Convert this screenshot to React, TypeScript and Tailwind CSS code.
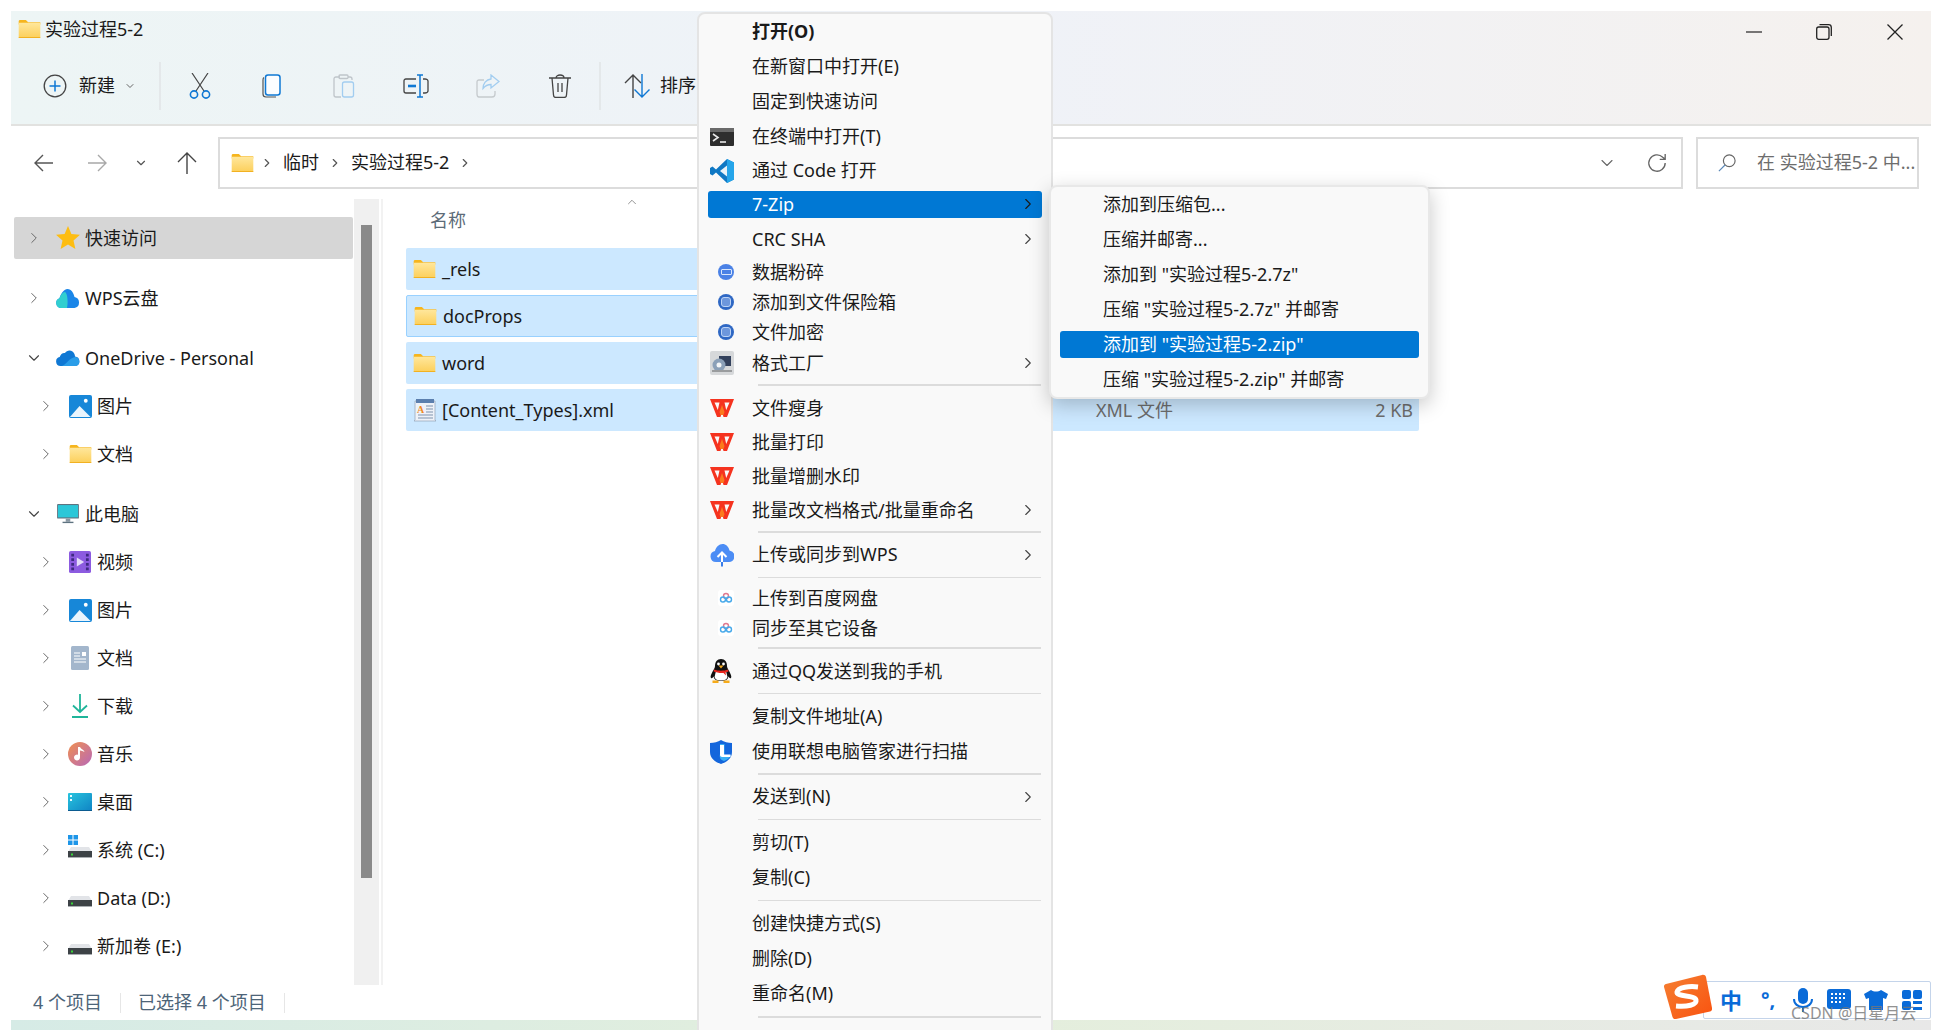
import { ChevronDown, ChevronRight, ChevronUp } from "lucide-react";

function FolderIcon({ className = "h-[18px] w-[23px]" }: { className?: string }) {
  return (
    <svg viewBox="0 0 24 20" className={className}>
      <defs>
        <linearGradient id="fold" x1="0" y1="0" x2="0" y2="1">
          <stop offset="0" stopColor="#ffe79c" />
          <stop offset="1" stopColor="#fccf5a" />
        </linearGradient>
      </defs>
      <path d="M0 1.5C0 .7.7 0 1.5 0H8l2.5 2.5H24V5H0z" fill="#f6b51e" />
      <rect x="0" y="3" width="24" height="17" rx="0.8" fill="url(#fold)" />
      <rect x="0" y="19" width="24" height="1" fill="#f1ae1b" />
    </svg>
  );
}

function XmlIcon() {
  return (
    <svg viewBox="0 0 24 24" className="h-[24px] w-[24px]">
      <path d="M2 3h20v19l1 1H1l1-1z" fill="#eef2f8" stroke="#9aa9bd" strokeWidth="0.8" />
      <rect x="3" y="1" width="18" height="4" fill="#5b7fae" />
      <text x="4" y="15" fontSize="10" fontWeight="700" fill="#f08a24" fontFamily="Liberation Serif">A</text>
      <path d="M13 8h7M13 11h7M13 14h7M5 17h15M5 20h15" stroke="#7f93ad" strokeWidth="1" />
    </svg>
  );
}

function PictureIcon() {
  return (
    <svg viewBox="0 0 24 24" className="h-[23px] w-[23px]">
      <rect x="0" y="0" width="24" height="24" rx="2" fill="#1787d8" />
      <circle cx="17.5" cy="6" r="2" fill="#fff" />
      <path d="M1 23 11 11.5 22.5 23z" fill="#eaf5fd" />
    </svg>
  );
}

function TreeIcon({ kind }: { kind: string }) {
  if (kind === "star")
    return (
      <svg viewBox="0 0 24 24" className="h-[24px] w-[24px]">
        <path d="m12 0 3.4 8 8.6.8-6.5 5.7L19.4 23 12 18.5 4.6 23l1.9-8.5L0 8.8 8.6 8z" fill="#fdbd12" />
      </svg>
    );
  if (kind === "wps")
    return (
      <svg viewBox="0 0 24 24" className="h-[24px] w-[24px]">
        <path d="M5 22a5 5 0 0 1-1.5-9.7C4.5 8.5 7.5 3 11.5 3s6 4 7 8a5.6 5.6 0 0 1 0 11z" fill="#1a86e8" />
        <path d="M5 22a5 5 0 0 1-1.5-9.7C4.5 9 7 6 9 6c3 2 3 11 2 16z" fill="#31cfd0" />
      </svg>
    );
  if (kind === "onedrive")
    return (
      <svg viewBox="0 0 24 18" className="h-[18px] w-[24px]">
        <path d="M4.5 17a4.5 4.5 0 0 1-.8-8.9C4.500 5 7 3.500 9 4 10.500 1.500 14 .500 16.500 2.500 18 3.500 19 5.500 19 7.500a4.800 4.800 0 0 1 .5 9.500z" fill="#0f78d4" />
        <path d="M19 8a4.600 4.600 0 0 1 1 9H6c4-1 7-8 13-9z" fill="#2a9de8" />
      </svg>
    );
  if (kind === "picture") return <PictureIcon />;
  if (kind === "folder") return <FolderIcon className="h-[18px] w-[23px]" />;
  if (kind === "pc")
    return (
      <svg viewBox="0 0 24 22" className="h-[20px] w-[24px]">
        <rect x="0" y="0" width="24" height="16" rx="1" fill="#5e7380" />
        <rect x="1" y="1.200" width="22" height="13.500" fill="#2bc7d8" />
        <rect x="9.500" y="16" width="5" height="3.500" fill="#8a98a3" />
        <rect x="6" y="19.500" width="12" height="1.500" fill="#5e7380" />
      </svg>
    );
  if (kind === "video")
    return (
      <svg viewBox="0 0 24 24" className="h-[24px] w-[22px]">
        <rect x="0" y="0" width="24" height="24" rx="2" fill="#8c5be0" />
        <path d="M2.500 3h3v3h-3zM2.500 8h3v3h-3zM2.500 13h3v3h-3zM2.500 18h3v3h-3zM18.500 3h3v3h-3zM18.500 8h3v3h-3zM18.500 13h3v3h-3zM18.500 18h3v3h-3z" fill="#3f2a82" />
        <path d="M8.500 7v10l8-5z" fill="#e4dcfa" />
      </svg>
    );
  if (kind === "doc")
    return (
      <svg viewBox="0 0 18 24" className="h-[24px] w-[18px]">
        <rect x="0" y="0" width="18" height="24" rx="1.500" fill="#a3b6cc" />
        <path d="M3 7h6M3 10h6M3 13h12M3 16h12" stroke="#fff" strokeWidth="1.100" />
        <rect x="11" y="6" width="4" height="4" fill="#fff" />
      </svg>
    );
  if (kind === "download")
    return (
      <svg viewBox="0 0 18 24" className="h-[24px] w-[18px]" fill="none" stroke="#1fb59a" strokeWidth="1.800">
        <path d="M9 0v18M2 11.500 9 18l7-6.500M1 23h16" />
      </svg>
    );
  if (kind === "music")
    return (
      <svg viewBox="0 0 24 24" className="h-[24px] w-[24px]">
        <defs>
          <linearGradient id="mus" x1="0" y1="0" x2="1" y2="1">
            <stop offset="0" stopColor="#f09050" />
            <stop offset="1" stopColor="#b868b8" />
          </linearGradient>
        </defs>
        <circle cx="12" cy="12" r="12" fill="url(#mus)" />
        <path d="M12 5v10.500a3 3 0 1 1-2-2.800V5zM12 5c1 2.500 4 2.500 4.500 5-1.500-1-3-1.500-4.500-1.500z" fill="#fff" />
      </svg>
    );
  if (kind === "desktop")
    return (
      <svg viewBox="0 0 24 18" className="h-[18px] w-[24px]">
        <defs>
          <linearGradient id="desk" x1="0" y1="0" x2="1" y2="1">
            <stop offset="0" stopColor="#28c4de" />
            <stop offset="1" stopColor="#0f83c4" />
          </linearGradient>
        </defs>
        <rect x="0" y="0" width="24" height="18" rx="1" fill="url(#desk)" />
        <rect x="2" y="2" width="2" height="2" fill="#e8fbff" />
        <rect x="2" y="6" width="2" height="2" fill="#e8fbff" />
        <rect x="0" y="17" width="24" height="1" fill="#0b5b90" />
      </svg>
    );
  const drive = (
    <>
      <path d="M3 8h18l3 5v0H0z" fill="#e2e4e8" />
      <rect x="0" y="12" width="24" height="7" fill="#3d4246" />
      <rect x="0" y="18" width="24" height="1" fill="#a9adb1" />
      <rect x="3" y="14.500" width="2" height="2" fill="#37d437" />
    </>
  );
  return (
    <svg viewBox="0 0 24 19" className={kind === "sys" ? "mb-[4px] h-[19px] w-[24px] overflow-visible" : "mb-[2px] h-[19px] w-[24px]"}>
      {kind === "sys" && <path d="M0-4h4.500V.500H0zM5.500-4H10V.500H5.500zM0 1.500h4.500V6H0zM5.500 1.500H10V6H5.500z" fill="#1d95e8" />}
      {drive}
    </svg>
  );
}

function Sep() {
  return <div className="h-[48px] w-[2px] bg-[#e4e8ea]" />;
}

function Toolbar() {
  return (
    <div className="flex h-[77px] items-center pl-[32px] text-[18px] text-[#1a1a1a]">
      <svg viewBox="0 0 24 24" className="h-[24px] w-[24px]" fill="none">
        <circle cx="12" cy="12" r="10.800" stroke="#444" strokeWidth="1.300" />
        <path d="M12 6.500v11M6.500 12h11" stroke="#0f78d4" strokeWidth="1.500" />
      </svg>
      <span className="ml-[12px] w-[36px]">新建</span>
      <ChevronDown className="ml-[9px] h-[12px] w-[12px] text-[#666]" />
      <div className="ml-[23px]"><Sep /></div>
      <div className="ml-[26px] flex w-[26px] justify-center">
        <svg viewBox="0 0 22 26" className="h-[26px] w-[22px]" fill="none">
          <path d="M3 0 15 18M19 0 7 18" stroke="#444" strokeWidth="1.200" />
          <circle cx="5" cy="21.500" r="3.600" stroke="#0f78d4" strokeWidth="1.600" />
          <circle cx="17" cy="21.500" r="3.600" stroke="#0f78d4" strokeWidth="1.600" />
        </svg>
      </div>
      <div className="ml-[46px] flex w-[26px] justify-center">
        <svg viewBox="0 0 20 24" className="h-[24px] w-[20px]" fill="none">
          <path d="M2 3.500C1 4 1 5 1 6v14c0 2 1 3 3 3h10" stroke="#555" strokeWidth="1.200" />
          <rect x="3.500" y="1" width="14.500" height="20" rx="2.500" fill="#fbfdff" stroke="#0f78d4" strokeWidth="1.500" />
        </svg>
      </div>
      <div className="ml-[46px] flex w-[26px] justify-center">
        <svg viewBox="0 0 22 24" className="h-[24px] w-[22px]" fill="none">
          <path d="M7 3H3C1.500 3 1 4 1 5v16c0 1 .5 2 2 2h5M15 3h2c1 0 2 .5 2 2v1" stroke="#bfc5ca" strokeWidth="1.300" />
          <rect x="6" y="1" width="9" height="3.500" rx="1" stroke="#bfc5ca" strokeWidth="1.300" />
          <rect x="9.500" y="8" width="11" height="15" rx="2" stroke="#a2cdf0" strokeWidth="1.300" />
        </svg>
      </div>
      <div className="ml-[46px] flex w-[26px] justify-center">
        <svg viewBox="0 0 26 24" className="h-[24px] w-[26px]" fill="none">
          <path d="M13 5H3C1.500 5 1 6 1 7v10c0 1 .5 2 2 2h10M20 5h2c1.500 0 3 1 3 2v10c0 1-1.500 2-3 2h-2" stroke="#444" strokeWidth="1.300" />
          <path d="M5 12h8" stroke="#0f78d4" strokeWidth="2.600" />
          <path d="M14 1h6M14 23h6M17 1v22" stroke="#0f78d4" strokeWidth="1.500" />
        </svg>
      </div>
      <div className="ml-[46px] flex w-[26px] justify-center">
        <svg viewBox="0 0 24 24" className="h-[24px] w-[24px]" fill="none">
          <path d="M8 6H3C1.500 6 1 7 1 8v12c0 2 1 3 2 3h13c2 0 3-1 3-3v-3" stroke="#c5cacd" strokeWidth="1.300" />
          <path d="M15 1l8 6.500-8 6.500v-3.500c-4 0-6 1.500-8 4 0-5 3-9 8-9.500z" stroke="#a2cdf0" strokeWidth="1.300" />
        </svg>
      </div>
      <div className="ml-[46px] flex w-[26px] justify-center">
        <svg viewBox="0 0 22 24" className="h-[24px] w-[22px]" fill="none" stroke="#444" strokeWidth="1.300">
          <path d="M0 4h22M7 4c0-4 8-4 8 0M3 4l1.500 17c0 1.500 1 2.500 2.500 2.500h8c1.500 0 2.500-1 2.500-2.500L19 4M9 9v9M13 9v9" />
        </svg>
      </div>
      <div className="ml-[26px]"><Sep /></div>
      <div className="ml-[23px] flex h-[24px] w-[26px] justify-center">
        <svg viewBox="0 0 26 24" className="h-[24px] w-[26px]" fill="none" strokeWidth="1.400">
          <path d="M9 24V1M1 9l8-8 8 8" stroke="#444" />
          <path d="M18 0v23M10.500 15.500 18 23l7.500-7.500" stroke="#0f78d4" />
        </svg>
      </div>
      <span className="ml-[10px]">排序</span>
    </div>
  );
}

function Header() {
  return (
    <header className="h-[115px] shrink-0 border-b-2 border-[#e2e2e0] bg-gradient-to-r from-[#edf5f5] via-[#eff2f8] to-[#f5f1ee]">
      <div className="flex h-[36px] items-center pl-[7px]">
        <FolderIcon />
        <span className="ml-[4px] text-[18px] text-[#1a1a1a]">实验过程5-2</span>
        <div className="ml-auto mt-[6px] flex items-center">
          <svg viewBox="0 0 16 16" className="h-[16px] w-[16px]"><path d="M0 8h16" stroke="#222" strokeWidth="1.200" /></svg>
          <svg viewBox="0 0 16 16" className="ml-[54px] h-[16px] w-[16px]" fill="none" stroke="#222" strokeWidth="1.300">
            <rect x="0.700" y="3" width="12.300" height="12.300" rx="2" />
            <path d="M3.500 .7h9c1.500 0 2.800 1.300 2.800 2.800v8.500" />
          </svg>
          <svg viewBox="0 0 16 16" className="ml-[55px] mr-[28px] h-[16px] w-[16px]"><path d="M.5.5l15 15M15.500.5l-15 15" stroke="#222" strokeWidth="1.300" /></svg>
        </div>
      </div>
      <Toolbar />
    </header>
  );
}

function NavBar() {
  return (
    <div className="flex h-[73px] shrink-0 items-center text-[18px] text-[#1a1a1a]">
      <svg viewBox="0 0 20 18" className="ml-[23px] h-[18px] w-[20px]" fill="none" stroke="#555" strokeWidth="1.400"><path d="M19 9H1M9 1 1 9l8 8" /></svg>
      <svg viewBox="0 0 20 18" className="ml-[33px] h-[18px] w-[20px]" fill="none" stroke="#a8a8a8" strokeWidth="1.400"><path d="M1 9h18M11 1l8 8-8 8" /></svg>
      <ChevronDown className="ml-[27px] h-[14px] w-[14px] text-[#555]" />
      <svg viewBox="0 0 20 22" className="ml-[29px] h-[22px] w-[20px]" fill="none" stroke="#444" strokeWidth="1.400"><path d="M10 22V1M1 10l9-9 9 9" /></svg>
      <div className="ml-[21px] flex h-[52px] w-[1465px] items-center border-2 border-[#dcdcdc] bg-white pl-[11px]">
        <FolderIcon />
        <ChevronRight className="ml-[6px] h-[14px] w-[14px] text-[#555]" />
        <span className="ml-[9px]">临时</span>
        <ChevronRight className="ml-[9px] h-[14px] w-[14px] text-[#555]" />
        <span className="ml-[9px]">实验过程5-2</span>
        <ChevronRight className="ml-[9px] h-[14px] w-[14px] text-[#555]" />
        <ChevronDown className="ml-auto h-[20px] w-[20px] stroke-[1.300] text-[#666]" />
        <svg viewBox="0 0 22 22" className="ml-[30px] mr-[14px] h-[20px] w-[20px]" fill="none" stroke="#666" strokeWidth="1.500">
          <path d="M20 11a9 9 0 1 1-2.700-6.400L20 7M20 1v6h-6" />
        </svg>
      </div>
      <div className="ml-[13px] flex h-[52px] w-[223px] items-center overflow-hidden whitespace-nowrap border-2 border-[#dcdcdc] bg-white pl-[20px] text-[#6d6d6d]">
        <svg viewBox="0 0 20 20" className="h-[18px] w-[18px]" fill="none" strokeWidth="1.300">
          <circle cx="12.500" cy="7.500" r="6.500" stroke="#666" />
          <path d="M7.800 12.200 1 19" stroke="#5b88b8" />
        </svg>
        <span className="ml-[21px]">在 实验过程5-2 中...</span>
      </div>
    </div>
  );
}

const tree = [
  { label: "快速访问", icon: "star", top: true, chevron: "right", hover: true },
  { label: "WPS云盘", icon: "wps", top: true, chevron: "right", group: "mt-[12px]" },
  { label: "OneDrive - Personal", icon: "onedrive", top: true, chevron: "down", group: "mt-[12px]" },
  { label: "图片", icon: "picture" },
  { label: "文档", icon: "folder" },
  { label: "此电脑", icon: "pc", top: true, chevron: "down", group: "mt-[12px]" },
  { label: "视频", icon: "video" },
  { label: "图片", icon: "picture" },
  { label: "文档", icon: "doc" },
  { label: "下载", icon: "download" },
  { label: "音乐", icon: "music" },
  { label: "桌面", icon: "desktop" },
  { label: "系统 (C:)", icon: "sys" },
  { label: "Data (D:)", icon: "drive" },
  { label: "新加卷 (E:)", icon: "drive" },
];

function Sidebar() {
  return (
    <aside className="w-[343px] shrink-0 pt-[15px] text-[18px] text-[#1a1a1a]">
      {tree.map((item, i) => (
        <div key={i} className={`flex h-[48px] items-center ${item.group ?? ""}`}>
          <div className={`ml-[3px] flex h-[42px] w-[339px] items-center rounded-[2px] ${item.hover ? "bg-[#d6d6d6]" : ""} ${item.top ? "pl-[11px]" : "pl-[23px]"}`}>
            {item.chevron === "down" ? (
              <ChevronDown className="h-[18px] w-[18px] stroke-[1.500] text-[#444]" />
            ) : (
              <ChevronRight className="h-[18px] w-[18px] stroke-[1.300] text-[#666]" />
            )}
            <div className="ml-[13px] flex w-[24px] justify-center"><TreeIcon kind={item.icon} /></div>
            <span className="ml-[5px]">{item.label}</span>
          </div>
        </div>
      ))}
    </aside>
  );
}

const files = [
  { name: "_rels", border: false },
  { name: "docProps", border: true },
  { name: "word", border: false },
];

function FileList() {
  return (
    <section className="ml-[23px] flex-1 text-[18px] text-[#1a1a1a]">
      <div className="relative h-[49px]">
        <span className="absolute left-[24px] top-[8px] text-[#5c6b78]">名称</span>
        <ChevronUp className="absolute left-[218px] top-[-4px] h-[14px] w-[16px] stroke-[1.200] text-[#666]" />
      </div>
      <div className="flex w-[1013px] flex-col gap-[5px]">
        {files.map((f) => (
          <div key={f.name} className={`flex h-[42px] items-center rounded-[2px] bg-[#cce8ff] pl-[7px] ${f.border ? "border border-[#99d1ff] pl-[6px]" : ""}`}>
            <FolderIcon />
            <span className="ml-[6px]">{f.name}</span>
          </div>
        ))}
        <div className="flex h-[42px] items-center rounded-[2px] bg-[#cce8ff] pl-[7px]">
          <XmlIcon />
          <span className="ml-[5px]">[Content_Types].xml</span>
          <span className="ml-[482px] text-[#6d6d6d]">XML 文件</span>
          <span className="ml-auto pr-[6px] text-[#6d6d6d]">2 KB</span>
        </div>
      </div>
    </section>
  );
}

function MenuIcon({ kind }: { kind?: string }) {
  if (!kind) return null;
  if (kind === "terminal")
    return (
      <svg viewBox="0 0 24 18" className="h-[18px] w-[24px]">
        <rect width="24" height="18" rx="1" fill="#2e2e2e" />
        <rect width="24" height="4" y="0" fill="#6a6a6a" />
        <path d="m3 6 5 3.500L3 13" fill="none" stroke="#e8e8e8" strokeWidth="1.600" />
        <path d="M10 14h6" stroke="#e8e8e8" strokeWidth="1.600" />
      </svg>
    );
  if (kind === "code")
    return (
      <svg viewBox="0 0 24 24" className="h-[24px] w-[24px]">
        <path d="M17 0 24 3.500v17L17 24 6 13.500 2.500 16.500 0 15v-6l2.500-1.500L6 10.500z" fill="#0f78c4" />
        <path d="M17 0 24 3.500v17L17 24z" fill="#25a5ea" />
        <path d="M17 6.500 10 12l7 5.500z" fill="#fff" fillOpacity="0.900" />
      </svg>
    );
  if (kind === "shred")
    return (
      <div className="ml-[8px] flex h-[16px] w-[16px] items-center justify-center rounded-full bg-[#4b82e6]">
        <div className="h-[6px] w-[11px] rounded-[1px] border border-[#d9e6fb]" />
      </div>
    );
  if (kind === "vault")
    return (
      <div className="ml-[8px] flex h-[16px] w-[16px] items-center justify-center rounded-full bg-[#2f68c4]">
        <div className="h-[10px] w-[10px] rounded-[3px] border border-[#bcd3f5] bg-[#6d97dc]" />
      </div>
    );
  if (kind === "factory")
    return (
      <svg viewBox="0 0 24 24" className="h-[24px] w-[24px]">
        <rect width="24" height="24" rx="2" fill="#d6d8da" />
        <rect x="9" y="5" width="12" height="10" fill="#33415c" />
        <circle cx="9" cy="14" r="6.500" fill="#8ba0b8" />
        <circle cx="9" cy="14" r="2.500" fill="#f3f5f7" />
        <path d="M2 20h20" stroke="#9a9c9e" strokeWidth="2" />
      </svg>
    );
  if (kind === "wps")
    return (
      <svg viewBox="0 0 24 20" className="h-[20px] w-[24px]">
        <path d="M0 1h24l-7 18h-3.500L12 14l-1.500 5H7z" fill="#f5331f" />
        <path d="M4.500 4.500h5L7.800 12zM14.500 4.500h5L16.200 12z" fill="#f9f9f9" />
        <path d="M9.500 14 12 7l2.500 7-1 3h-3z" fill="#fb7a1e" />
      </svg>
    );
  if (kind === "cloud")
    return (
      <svg viewBox="0 0 24 24" className="h-[24px] w-[24px]">
        <path d="M6 19a5.500 5.500 0 0 1-1-10.900C6 4 9 1 12.500 1c3.500 0 6 2.500 7 6.500a5.800 5.800 0 0 1-.5 11.500z" fill="#4c8df5" />
        <path d="M12 19V10M7.500 14 12 9.500l4.500 4.500" fill="none" stroke="#fff" strokeWidth="2" />
        <path d="M12 19v4.500" stroke="#3a7de8" strokeWidth="2" />
      </svg>
    );
  if (kind === "baidu")
    return (
      <svg viewBox="0 0 16 16" className="ml-[8px] h-[16px] w-[16px]" fill="none">
        <rect width="16" height="16" rx="3" fill="#fff" />
        <circle cx="8" cy="6" r="2.500" stroke="#e07a90" strokeWidth="1.400" />
        <circle cx="5" cy="9.500" r="2.500" stroke="#47a9ea" strokeWidth="1.400" />
        <circle cx="11" cy="9.500" r="2.500" stroke="#47a9ea" strokeWidth="1.400" />
      </svg>
    );
  if (kind === "qq")
    return (
      <svg viewBox="0 0 22 24" className="h-[24px] w-[22px]">
        <path d="M11 0c4 0 6 3 6 7 0 1 .5 2 1.500 4 2 3.500 3.500 6.500 2.500 8-.8.8-2-.5-2.500-1.500-.5 3-3 4.500-7.500 4.500S4 20.500 3.500 17.500C3 18.500 1.800 19.800 1 19c-1-1.500.5-4.500 2.500-8C4.500 9 5 8 5 7c0-4 2-7 6-7z" fill="#111" />
        <path d="M6 12c3 1 7 1 10 0l1.500 6c-.5 2.500-3 3.500-6.500 3.500S5 20.500 4.500 18z" fill="#fff" />
        <path d="M4 10.500c4 1.600 10 1.600 14 0l.5 2c-1 .5-2 .8-3 1l.5 3-2.500-2.600c-2 .2-4 .1-6-.4-1.500-.4-3-.7-3.800-1z" fill="#e8261e" />
        <path d="M8.500 6.500h5L11 9.500z" fill="#f6ab1a" />
        <circle cx="8.500" cy="5" r="1.400" fill="#fff" />
        <circle cx="13.500" cy="5" r="1.400" fill="#fff" />
        <path d="M2.500 21.500h6V24h-6zM13.500 21.500h6V24h-6z" fill="#f6ab1a" />
      </svg>
    );
  return (
    <svg viewBox="0 0 22 24" className="h-[24px] w-[22px]">
      <path d="M11 0c3 2 7 3 11 3v9c0 6-5 10-11 12C5 22 0 18 0 12V3c4 0 8-1 11-3z" fill="#1466dc" />
      <path d="M10 4h4.500v11H21c-1 3-4 5-7 6-3-1-5-3-4-7z" fill="#39b0f5" />
      <path d="M10 5h4v9.500h6.500V17H12c-1 0-2-1-2-2z" fill="#fff" />
    </svg>
  );
}

const menu = [
  { label: "打开(O)", h: "h-[35px]", bold: true },
  { label: "在新窗口中打开(E)", h: "h-[35px]" },
  { label: "固定到快速访问", h: "h-[35px]" },
  { label: "在终端中打开(T)", h: "h-[35px]", icon: "terminal" },
  { label: "通过 Code 打开", h: "h-[33px]", icon: "code" },
  { label: "7-Zip", h: "h-[34px]", more: true, active: true },
  { label: "CRC SHA", h: "h-[36px]", more: true },
  { label: "数据粉碎", h: "h-[30px]", icon: "shred" },
  { label: "添加到文件保险箱", h: "h-[30px]", icon: "vault" },
  { label: "文件加密", h: "h-[30px]", icon: "vault" },
  { label: "格式工厂", h: "h-[32px]", icon: "factory", more: true },
  { sep: "h-[12px]" },
  { label: "文件瘦身", h: "h-[34px]", icon: "wps" },
  { label: "批量打印", h: "h-[34px]", icon: "wps" },
  { label: "批量增删水印", h: "h-[34px]", icon: "wps" },
  { label: "批量改文档格式/批量重命名", h: "h-[34px]", icon: "wps", more: true },
  { sep: "h-[10px]" },
  { label: "上传或同步到WPS", h: "h-[35px]", icon: "cloud", more: true },
  { sep: "h-[11px]" },
  { label: "上传到百度网盘", h: "h-[30px]", icon: "baidu" },
  { label: "同步至其它设备", h: "h-[30px]", icon: "baidu" },
  { sep: "h-[10px]" },
  { label: "通过QQ发送到我的手机", h: "h-[36px]", icon: "qq" },
  { sep: "h-[9px]" },
  { label: "复制文件地址(A)", h: "h-[36px]" },
  { label: "使用联想电脑管家进行扫描", h: "h-[35px]", icon: "shield" },
  { sep: "h-[10px]" },
  { label: "发送到(N)", h: "h-[35px]", more: true },
  { sep: "h-[11px]" },
  { label: "剪切(T)", h: "h-[35px]" },
  { label: "复制(C)", h: "h-[35px]" },
  { sep: "h-[11px]" },
  { label: "创建快捷方式(S)", h: "h-[35px]" },
  { label: "删除(D)", h: "h-[35px]" },
  { label: "重命名(M)", h: "h-[35px]" },
  { sep: "h-[12px]" },
];

function ContextMenu() {
  return (
    <div className="absolute left-[697px] top-[12px] h-[1040px] w-[356px] rounded-[8px] border-2 border-[#e4e4e4] bg-[#f9f9f9] px-[9px] text-[18px] text-[#1a1a1a]">
      {menu.map((m, i) =>
        m.sep ? (
          <div key={i} className={`flex items-center pl-[50px] pr-[1px] ${m.sep}`}>
            <div className="h-[1.500px] w-full bg-[#dcdcdc]" />
          </div>
        ) : (
          <div key={i} className={`flex items-center ${m.h}`}>
            <div className={`flex h-[27px] w-full items-center rounded-[3px] ${m.active ? "bg-[#0078d4] text-white" : ""}`}>
              <div className="ml-[2px] flex w-[24px] justify-start">
                <MenuIcon kind={m.icon} />
              </div>
              <span className={`ml-[18px] ${m.bold ? "font-bold" : ""}`}>{m.label}</span>
              {m.more && <ChevronRight className={`ml-auto mr-[5px] h-[18px] w-[18px] stroke-[1.500] ${m.active ? "text-[#1a1a1a]" : "text-[#444]"}`} />}
            </div>
          </div>
        )
      )}
    </div>
  );
}

const subMenu = [
  "添加到压缩包...",
  "压缩并邮寄...",
  '添加到 "实验过程5-2.7z"',
  '压缩 "实验过程5-2.7z" 并邮寄',
  '添加到 "实验过程5-2.zip"',
  '压缩 "实验过程5-2.zip" 并邮寄',
];

function SubMenu() {
  return (
    <div className="absolute left-[1049px] top-[185px] h-[214px] w-[381px] rounded-[8px] border-2 border-[#e8e8e8] bg-[#f9f9f9] px-[9px] text-[18px] text-[#1a1a1a] shadow-[0_6px_20px_rgba(0,0,0,0.22)]">
      {subMenu.map((s, i) => (
        <div key={s} className="flex h-[35px] items-center">
          <div className={`flex h-[27px] w-full items-center rounded-[3px] pl-[43px] ${i === 4 ? "bg-[#0078d4] text-white" : ""}`}>{s}</div>
        </div>
      ))}
    </div>
  );
}

function ImeBar() {
  return (
    <>
      <div className="absolute left-[1703px] top-[981px] flex h-[38px] w-[228px] items-center rounded-[2px] border border-[#c4d4ea] bg-white pl-[16px] text-[#0a6bd8]">
        <span className="text-[22px] font-bold leading-none">中</span>
        <span className="ml-[19px] text-[20px] font-bold leading-none">°,</span>
        <svg viewBox="0 0 20 24" className="ml-[18px] h-[24px] w-[20px]" fill="none">
          <rect x="5" y="0" width="10" height="16" rx="5" fill="#0a6bd8" />
          <path d="M1 11c0 5 4 8 9 8s9-3 9-8M10 19v5" stroke="#0a6bd8" strokeWidth="2" />
        </svg>
        <svg viewBox="0 0 24 22" className="ml-[14px] h-[22px] w-[24px]">
          <rect width="24" height="20" rx="3" fill="#0a6bd8" />
          <path d="M4 5h16M4 9h16M4 13h11" stroke="#fff" strokeWidth="2" strokeDasharray="2 2" />
        </svg>
        <svg viewBox="0 0 24 20" className="ml-[13px] h-[20px] w-[24px]">
          <path d="M7 0c3 2 7 2 10 0l7 4-2 5-3-1v12H5V8L2 9 0 4z" fill="#0a6bd8" />
        </svg>
        <svg viewBox="0 0 20 20" className="ml-[14px] h-[20px] w-[20px]" fill="#0a6bd8">
          <rect width="9" height="9" rx="2" />
          <rect x="11" width="9" height="9" rx="2" />
          <rect y="11" width="9" height="9" rx="2" />
          <rect x="11" y="11" width="9" height="3" />
          <rect x="11" y="17" width="9" height="3" />
        </svg>
      </div>
      <svg viewBox="0 0 48 46" className="absolute left-[1664px] top-[974px] h-[46px] w-[48px]">
        <defs>
          <linearGradient id="sg" x1="0" y1="0" x2="1" y2="1">
            <stop offset="0" stopColor="#f57f32" />
            <stop offset="1" stopColor="#f9520f" />
          </linearGradient>
        </defs>
        <path d="M2 10 38 1c2-.5 3.500.5 4 2l6 31c.3 2-.5 3-2 3.500L12 45c-2 .3-3-.5-3.500-2L0 13c-.3-1.500.5-2.500 2-3z" fill="url(#sg)" />
        <path d="M34 13c-8-1-20 0-21 5s18 3 19 8-9 7-20 6" fill="none" stroke="#fff" strokeWidth="5" />
      </svg>
      <span className="absolute left-[1791px] top-[1001px] whitespace-nowrap text-[16px] text-[#777] opacity-80">CSDN @日星月云</span>
    </>
  );
}

export default function App() {
  return (
    <div className="relative h-[1030px] w-[1942px] overflow-hidden bg-white font-['Noto_Sans','Noto_Sans_CJK_SC',sans-serif]">
      <div className="ml-[11px] flex h-[1030px] w-[1920px] flex-col pt-[11px]">
        <Header />
        <NavBar />
        <div className="flex h-[786px] shrink-0">
          <Sidebar />
          <div className="h-full w-[25px] shrink-0 bg-[#f0f0f0] pl-[7px] pt-[26px]">
            <div className="h-[653px] w-[11px] bg-[#8a8a8a]" />
          </div>
          <div className="ml-[2px] h-full w-[2px] bg-[#f2f2f2]" />
          <FileList />
        </div>
        <div className="flex h-[35px] shrink-0 items-center pl-[22px] text-[18px] text-[#4d6478]">
          <span>4 个项目</span>
          <div className="ml-[18px] h-[20px] w-[1px] bg-[#e6e6e6]" />
          <span className="ml-[17px]">已选择 4 个项目</span>
          <div className="ml-[18px] h-[20px] w-[1px] bg-[#e6e6e6]" />
        </div>
        <div className="h-[10px] shrink-0 bg-gradient-to-r from-[#d6ebe6] via-[#e4efdc] to-[#e8e8e8]" />
      </div>
      <ContextMenu />
      <SubMenu />
      <ImeBar />
    </div>
  );
}
